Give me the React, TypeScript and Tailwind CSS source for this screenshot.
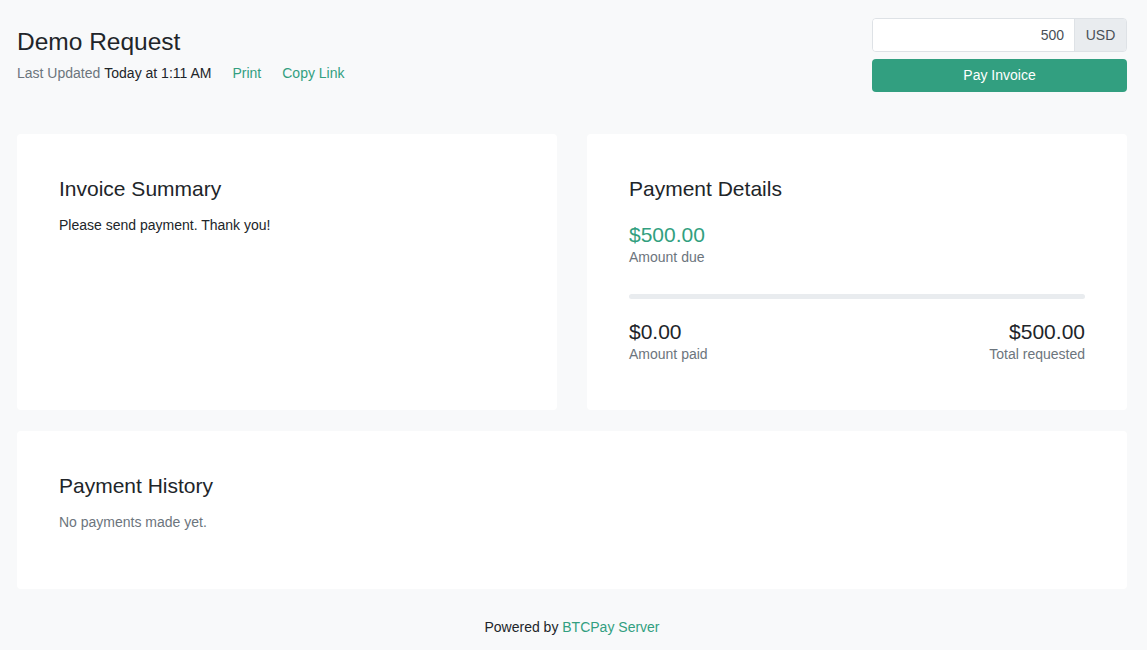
import React from "react";

const font = { fontFamily: '"Liberation Sans", Arial, sans-serif' };

const App = () => {
  return (
    <div className="min-h-screen bg-[#f8f9fa] text-[#212529]" style={font}>
      <div className="pl-[17px] pr-[20px]">
        <header className="flex items-start justify-between pt-[18px]">
          <div className="pt-[10px]">
            <h1 className="text-[24.5px] leading-[28px]">Demo Request</h1>
            <div className="mt-[7px] flex items-center text-[14px] leading-[21px]">
              <span className="text-[#6c757d]">Last Updated</span>
              <span className="ml-[4px]">Today at 1:11 AM</span>
              <a className="ml-[21px] text-[#329f80]">Print</a>
              <a className="ml-[21px] text-[#329f80]">Copy Link</a>
            </div>
          </div>
          <div className="w-[255px]">
            <div className="flex h-[34px] rounded-[4px] border border-[#dee2e6] overflow-hidden text-[14px]">
              <div className="flex-1 bg-white flex items-center justify-end pr-[10px] text-[#495057]">500</div>
              <div className="w-[52px] bg-[#e9ecef] border-l border-[#dee2e6] flex items-center justify-center text-[#495057]">USD</div>
            </div>
            <button className="mt-[7px] w-full h-[33px] rounded-[4px] bg-[#329f80] text-white text-[14px]">
              Pay Invoice
            </button>
          </div>
        </header>

        <div className="mt-[42px] grid grid-cols-2 gap-[30px]">
          <section className="h-[276px] rounded-[4px] bg-white px-[42px] pt-[42px]">
            <h2 className="text-[21px] leading-[25px]">Invoice Summary</h2>
            <p className="mt-[14px] text-[14px] leading-[21px]">Please send payment. Thank you!</p>
          </section>
          <section className="h-[276px] rounded-[4px] bg-white px-[42px] pt-[42px]">
            <h2 className="text-[21px] leading-[25px]">Payment Details</h2>
            <div className="mt-[21px] text-[21px] leading-[25px] text-[#329f80]">$500.00</div>
            <div className="text-[14px] leading-[21px] text-[#6c757d]">Amount due</div>
            <div className="mt-[26px] h-[5px] rounded-full bg-[#e9ecef]" />
            <div className="mt-[20px] flex justify-between">
              <div>
                <div className="text-[21px] leading-[25px]">$0.00</div>
                <div className="text-[14px] leading-[21px] text-[#6c757d]">Amount paid</div>
              </div>
              <div className="text-right">
                <div className="text-[21px] leading-[25px]">$500.00</div>
                <div className="text-[14px] leading-[21px] text-[#6c757d]">Total requested</div>
              </div>
            </div>
          </section>
        </div>

        <section className="mt-[21px] h-[158px] rounded-[4px] bg-white px-[42px] pt-[42px]">
          <h2 className="text-[21px] leading-[25px]">Payment History</h2>
          <p className="mt-[14px] text-[14px] leading-[21px] text-[#6c757d]">No payments made yet.</p>
        </section>

        <footer className="pt-[28px] text-center text-[14px] leading-[21px]">
          Powered by <a className="text-[#329f80]">BTCPay Server</a>
        </footer>
      </div>
    </div>
  );
};

export default App;
